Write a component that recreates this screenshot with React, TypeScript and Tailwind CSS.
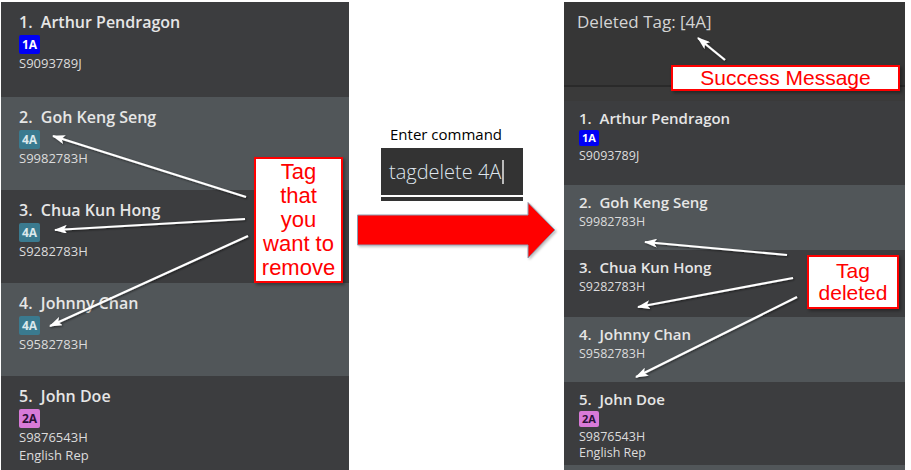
import React from 'react';

type Tag = { label: string; cls: string };
type Person = { no: number; name: string; tag?: Tag; id: string; extra?: string };

const TAG_1A: Tag = { label: '1A', cls: 'bg-[#0000f5] text-white' };
const TAG_4A: Tag = { label: '4A', cls: 'bg-[#3a7a8f] text-[#dbe8ec]' };
const TAG_2A: Tag = { label: '2A', cls: 'bg-[#d87ad8] text-[#2a1036]' };

const DARK = 'bg-[#3c3d3f]';
const LIGHT = 'bg-[#515659]';

const before: Person[] = [
  { no: 1, name: 'Arthur Pendragon', tag: TAG_1A, id: 'S9093789J' },
  { no: 2, name: 'Goh Keng Seng', tag: TAG_4A, id: 'S9982783H' },
  { no: 3, name: 'Chua Kun Hong', tag: TAG_4A, id: 'S9282783H' },
  { no: 4, name: 'Johnny Chan', tag: TAG_4A, id: 'S9582783H' },
  { no: 5, name: 'John Doe', tag: TAG_2A, id: 'S9876543H', extra: 'English Rep' },
];

const after: Person[] = [
  { no: 1, name: 'Arthur Pendragon', tag: TAG_1A, id: 'S9093789J' },
  { no: 2, name: 'Goh Keng Seng', id: 'S9982783H' },
  { no: 3, name: 'Chua Kun Hong', id: 'S9282783H' },
  { no: 4, name: 'Johnny Chan', id: 'S9582783H' },
  { no: 5, name: 'John Doe', tag: TAG_2A, id: 'S9876543H', extra: 'English Rep' },
];

const leftHeights = ['h-[95px]', 'h-[93px]', 'h-[93px]', 'h-[93px]', 'h-[94px]'];
const rightHeights = ['h-[84px]', 'h-[65px]', 'h-[67px]', 'h-[65px]', 'h-[83px]'];

const TagChip = ({ tag, small }: { tag: Tag; small?: boolean }) => (
  <span
    className={`inline-flex items-center justify-center rounded-[2px] font-bold ${
      small ? 'h-[16px] px-[3px] text-[11px]' : 'h-[19px] px-[3px] text-[12px]'
    } ${tag.cls}`}
  >
    {tag.label}
  </span>
);

const Card = ({ p, h, small }: { p: Person; h: string; small?: boolean }) => (
  <div
    className={`${h} ${p.no % 2 === 0 ? LIGHT : DARK} flex shrink-0 flex-col items-start ${
      small ? 'pl-[15px] pt-[7px]' : 'pl-[18px] pt-[9px]'
    }`}
  >
    <div
      className={`whitespace-pre font-semibold text-[#e6e6e6] ${
        small ? 'text-[15px] leading-[20px]' : 'text-[16px] leading-[22px]'
      }`}
    >
      {`${p.no}.  ${p.name}`}
    </div>
    {p.tag && (
      <div className="mt-[2px] flex">
        <TagChip tag={p.tag} small={small} />
      </div>
    )}
    <div
      className={`text-[#dcdcdc] ${
        small ? 'mt-[2px] text-[12.5px] leading-[16px]' : 'text-[13px] leading-[18px]'
      }`}
    >
      {p.id}
    </div>
    {p.extra && (
      <div className={`text-[#dcdcdc] ${small ? 'text-[12.5px] leading-[16px]' : 'text-[13px] leading-[18px]'}`}>
        {p.extra}
      </div>
    )}
  </div>
);

// white pointer lines drawn on top of the screenshots
const pointers: [number, number, number, number][] = [
  [246, 197, 53, 136],
  [245, 219, 55, 230],
  [248, 236, 50, 326],
  [725, 60, 698, 38],
  [787, 255, 645, 242],
  [793, 278, 638, 307],
  [797, 297, 636, 377],
];

export default function App() {
  return (
    <div className="relative flex h-[470px] w-[911px] overflow-hidden bg-white pt-[2px] font-['Open_Sans','Noto_Sans',sans-serif]">
      {/* before */}
      <div className="ml-[1px] flex w-[348px] flex-col">
        {before.map((p, i) => (
          <Card key={p.no} p={p} h={leftHeights[i]} />
        ))}
      </div>

      {/* command + big arrow */}
      <div className="flex w-[215px] flex-col">
        <div className="mt-[122px] pl-[41px] text-[15px] leading-[20px] text-black">Enter command</div>
        <div className="ml-[32px] mt-[4px] w-[142px]">
          <div className="flex h-[47px] items-center bg-[#333333] pl-[8px] text-[20px] font-light text-[#dfe6ee]">
            tagdelete 4A
            <span className="ml-[1px] h-[24px] w-[2px] bg-[#bbbbbb]" />
          </div>
          <div className="h-[2px] bg-white" />
          <div className="h-[4px] bg-[#333333]" />
        </div>
        <svg className="ml-[8px] mt-[1px]" width="204" height="60" viewBox="0 0 204 60">
          <defs>
            <filter id="bigsh" x="-10%" y="-20%" width="130%" height="150%">
              <feDropShadow dx="1.5" dy="1.5" stdDeviation="1" floodColor="#000" floodOpacity="0.25" />
            </filter>
          </defs>
          <polygon
            points="0.5,13 171,13 171,0.5 198,28 171,56 171,43 0.5,43"
            fill="#ff0000"
            stroke="#8c9cb0"
            strokeWidth="1"
            filter="url(#bigsh)"
          />
        </svg>
      </div>

      {/* after */}
      <div className="flex w-[341px] flex-col">
        <div className="h-[83px] shrink-0 bg-[#363636] pl-[13px] pt-[8px] text-[17px] leading-[24px] text-[#d4d4d4]">
          Deleted Tag: [4A]
        </div>
        <div className="h-[2px] shrink-0 bg-[#2a2a2a]" />
        <div className="h-[14px] shrink-0 bg-[#3a3a3a]" />
        {after.map((p, i) => (
          <Card key={p.no} p={p} h={rightHeights[i]} small />
        ))}
        <div className={`flex-1 ${LIGHT}`} />
      </div>

      {/* annotation pointers */}
      <svg className="pointer-events-none absolute left-0 top-0" width="911" height="470">
        <defs>
          <marker id="ah" markerWidth="13" markerHeight="9" refX="12" refY="4.5" orient="auto" markerUnits="userSpaceOnUse">
            <path d="M0,0 L13,4.5 L0,9 L3,4.5 z" fill="#ffffff" />
          </marker>
          <filter id="glow" x="-20%" y="-20%" width="140%" height="140%">
            <feDropShadow dx="1" dy="1" stdDeviation="1.2" floodColor="#000" floodOpacity="0.55" />
          </filter>
        </defs>
        {pointers.map(([x1, y1, x2, y2], i) => (
          <line
            key={i}
            x1={x1}
            y1={y1}
            x2={x2}
            y2={y2}
            stroke="#ffffff"
            strokeWidth="2.2"
            markerEnd="url(#ah)"
            filter="url(#glow)"
          />
        ))}
      </svg>

      {/* callouts */}
      <div className="absolute left-[254px] top-[157px] flex h-[126px] w-[89px] flex-col items-center justify-center border-2 border-[#ff0000] bg-white font-['Liberation_Sans',Arial,sans-serif] text-[22px] leading-[24px] text-[#ff0000] shadow-[2px_2px_3px_rgba(0,0,0,0.35)]">
        <span>Tag</span>
        <span>that</span>
        <span>you</span>
        <span>want to</span>
        <span>remove</span>
      </div>
      <div className="absolute left-[671px] top-[65px] flex h-[26px] w-[229px] items-center justify-center border-2 border-[#ff0000] bg-white font-['Liberation_Sans',Arial,sans-serif] text-[21px] leading-[22px] text-[#ff0000] shadow-[2px_2px_3px_rgba(0,0,0,0.35)]">
        Success Message
      </div>
      <div className="absolute left-[807px] top-[255px] flex h-[54px] w-[92px] flex-col items-center justify-center border-2 border-[#ff0000] bg-white font-['Liberation_Sans',Arial,sans-serif] text-[21px] leading-[22px] text-[#ff0000] shadow-[2px_2px_3px_rgba(0,0,0,0.35)]">
        <span>Tag</span>
        <span>deleted</span>
      </div>
    </div>
  );
}
